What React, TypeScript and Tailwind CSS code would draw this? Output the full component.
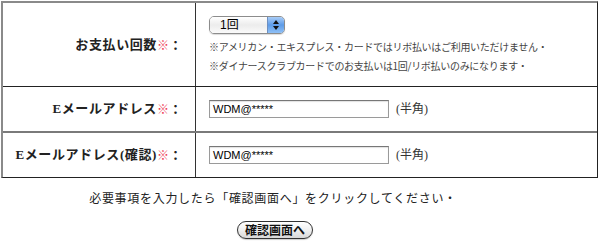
import React from "react";

const serif = { fontFamily: '"Liberation Serif", "Noto Sans CJK JP", serif' };
const jp = { fontFamily: '"Noto Sans CJK JP", sans-serif' };
const sans = { fontFamily: '"Liberation Sans", "Noto Sans CJK JP", sans-serif' };

function Label({ text }: { text: string }) {
  return (
    <div
      className="flex items-center justify-end pr-[13px] border-r border-[#333] text-[13px] font-bold text-[#222]"
      style={serif}
    >
      <span className="tracking-[0.6px]">{text}</span>
      <span className="text-[#ee3a55] font-normal text-[12px]" style={jp}>※</span>
      <span style={jp}>：</span>
    </div>
  );
}

function Select() {
  return (
    <div className="flex h-[18px] w-[76px] rounded-[5px] border border-[#8c8c8c] overflow-hidden shadow-[0_1px_1px_rgba(0,0,0,0.15)]">
      <div
        className="flex-1 flex items-center pl-[10px] text-[12px] text-black bg-gradient-to-b from-white via-[#ececec] to-[#fafafa]"
        style={sans}
      >
        1回
      </div>
      <div className="w-[17px] flex flex-col items-center justify-center gap-[2px] bg-gradient-to-b from-[#a9cdf7] via-[#5d9be8] to-[#8fc0f5] border-l border-[#6d8fc0]">
        <svg width="6" height="4" viewBox="0 0 6 4"><path d="M3 0 L6 4 L0 4 Z" fill="#111" /></svg>
        <svg width="6" height="4" viewBox="0 0 6 4"><path d="M0 0 L6 0 L3 4 Z" fill="#111" /></svg>
      </div>
    </div>
  );
}

function EmailField() {
  return (
    <div className="flex items-center pl-[13px]">
      <div
        className="w-[180px] h-[18px] border border-[#9a9a9a] border-t-[#777] shadow-[inset_0_1px_1px_rgba(0,0,0,0.12)] flex items-center pl-[3px] text-[11px] text-black bg-white"
        style={sans}
      >
        WDM@*****
      </div>
      <span className="ml-[7px] text-[12px] text-[#333]" style={serif}>(半角)</span>
    </div>
  );
}

export default function App() {
  return (
    <div className="w-[600px] h-[246px] bg-white overflow-hidden">
      <div className="ml-[1px] mt-[1px] w-[597px] border-t-2 border-l-2 border-t-[#8a8a8a] border-l-[#8a8a8a] border-r border-b border-r-[#222] border-b-[#222]">
        <div className="grid grid-cols-[193px_1fr] h-[84px] border-b border-[#222]">
          <Label text="お支払い回数" />
          <div className="pt-[13px] pl-[13px]">
            <Select />
            <div className="mt-[3px] text-[10px] leading-[19px] text-[#444] tracking-[-0.3px]" style={jp}>
              <div>※アメリカン・エキスプレス・カードではリボ払いはご利用いただけません・</div>
              <div>※ダイナースクラブカードでのお支払いは1回/リボ払いのみになります・</div>
            </div>
          </div>
        </div>
        <div className="grid grid-cols-[193px_1fr] h-[46px] border-b-2 border-[#7a7a7a]">
          <Label text="Eメールアドレス" />
          <EmailField />
        </div>
        <div className="grid grid-cols-[193px_1fr] h-[44px]">
          <Label text="Eメールアドレス(確認)" />
          <EmailField />
        </div>
      </div>
      <div className="flex justify-center mt-[11px]">
        <span className="text-[12px] text-[#222] tracking-[0.7px] ml-[-54px]" style={jp}>
          必要事項を入力したら「確認画面へ」をクリックしてください・
        </span>
      </div>
      <div className="flex justify-center mt-[14px]">
        <div
          className="h-[18px] w-[76px] ml-[-50px] rounded-full border border-[#333] bg-gradient-to-b from-white via-[#f0f0f0] to-[#d8d8d8] flex items-center justify-center text-[12px] font-bold text-[#111] shadow-[0_1px_1px_rgba(0,0,0,0.2)]"
          style={jp}
        >
          確認画面へ
        </div>
      </div>
    </div>
  );
}
